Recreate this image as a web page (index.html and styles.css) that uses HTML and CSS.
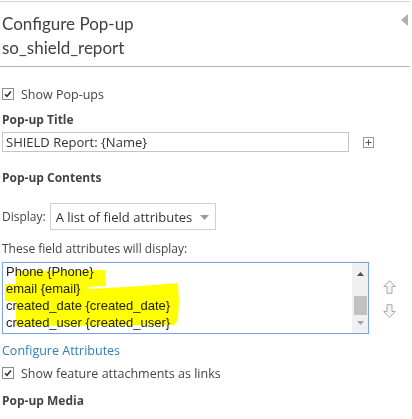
FILE: index.html
```html
<!DOCTYPE html>
<html>
<head>
<meta charset="utf-8">
<link rel="stylesheet" href="styles.css">
</head>
<body>
<div class="panel">
  <div class="header">
    <div class="titles">
      <div class="title">Configure Pop-up</div>
      <div class="subtitle">so_shield_report</div>
    </div>
    <svg class="collapse" width="7" height="12" viewBox="0 0 7 12"><polygon points="7,0 7,12 0,6" fill="#b0b0b0"/></svg>
  </div>
  <div class="content">
    <label class="check check-first">
      <span class="box"><svg width="8" height="8" viewBox="0 0 8 8"><path d="M1 4.2 L3 6.3 L7 1.5" fill="none" stroke="#333" stroke-width="1.6"/></svg></span>
      <span>Show Pop-ups</span>
    </label>
    <div class="section-title st-title">Pop-up Title</div>
    <div class="title-row">
      <div class="input">SHIELD Report: {Name}</div>
      <span class="plus"><svg width="11" height="11" viewBox="0 0 11 11"><rect x="0.5" y="0.5" width="10" height="10" fill="#fff" stroke="#999"/><path d="M5.5 2.5 V8.5 M2.5 5.5 H8.5" stroke="#555" stroke-width="1"/></svg></span>
    </div>
    <div class="section-title st-contents">Pop-up Contents</div>
    <div class="display-row">
      <span class="display-label">Display:</span>
      <div class="select">
        <span>A list of field attributes</span>
        <svg class="caret" width="9" height="5" viewBox="0 0 9 5"><polygon points="0,0 9,0 4.5,5" fill="#999"/></svg>
      </div>
    </div>
    <div class="hint">These field attributes will display:</div>
    <div class="list-row">
      <div class="listbox">
        <svg class="highlight" width="190" height="70" viewBox="0 0 190 70">
          <path d="M14 9 L103 8 L104 24 L86 25 L86 27 L140 24 L176 21 L177 40 L176 58 L172 63 L14 64 L14 40 L3 39 L3 22 L14 22 Z" fill="#ffff00"/>
        </svg>
        <div class="items">
          <div class="item">Phone {Phone}</div>
          <div class="item">email {email}</div>
          <div class="item">created_date {created_date}</div>
          <div class="item">created_user {created_user}</div>
        </div>
        <div class="scrollbar">
          <svg class="sb-up" width="7" height="4" viewBox="0 0 7 4"><polygon points="0,4 7,4 3.5,0" fill="#505050"/></svg>
          <div class="thumb"></div>
          <svg class="sb-down" width="7" height="4" viewBox="0 0 7 4"><polygon points="0,0 7,0 3.5,4" fill="#a3a3a3"/></svg>
        </div>
      </div>
      <div class="arrows">
        <svg width="13" height="14" viewBox="0 0 13 14"><path d="M6.5 0.7 L12.3 6.5 L9 6.5 L9 13.3 L4 13.3 L4 6.5 L0.7 6.5 Z" fill="#f6f6f6" stroke="#a8a8a8" stroke-width="1"/></svg>
        <svg width="13" height="14" viewBox="0 0 13 14"><path d="M6.5 13.3 L12.3 7.5 L9 7.5 L9 0.7 L4 0.7 L4 7.5 L0.7 7.5 Z" fill="#f6f6f6" stroke="#a8a8a8" stroke-width="1"/></svg>
      </div>
    </div>
    <a class="link">Configure Attributes</a>
    <label class="check check-second">
      <span class="box"><svg width="8" height="8" viewBox="0 0 8 8"><path d="M1 4.2 L3 6.3 L7 1.5" fill="none" stroke="#333" stroke-width="1.6"/></svg></span>
      <span>Show feature attachments as links</span>
    </label>
    <div class="section-title st-media">Pop-up Media</div>
  </div>
</div>
</body>
</html>
```
FILE: styles.css
```css
html, body {
  margin: 0;
  padding: 0;
  background: #fff;
}
body {
  font-family: "Open Sans", "Noto Sans", sans-serif;
  color: #444;
  width: 412px;
  height: 419px;
  overflow: hidden;
}
.panel {
  padding-top: 1px;
}
.header {
  display: flex;
  justify-content: space-between;
  align-items: flex-start;
  border-top: 1px solid #d4d4d4;
  border-bottom: 1px solid #b4b4b4;
  width: 410px;
  padding: 10px 0 0 2px;
  box-sizing: border-box;
  height: 66px;
}
.title,
.subtitle {
  font-family: Lato, "Open Sans", sans-serif;
  font-size: 17px;
  line-height: 24px;
  color: #404040;
}
.collapse {
  margin-top: 2px;
  margin-right: 2px;
}
.content {
  padding-left: 2px;
}
.check {
  display: flex;
  align-items: center;
  gap: 7px;
  font-size: 12.5px;
  color: #444;
  height: 14px;
}
.check-first {
  margin-top: 20px;
}
.check-second {
  margin-top: 7px;
}
.box {
  width: 10px;
  height: 10px;
  border: 1px solid #8c8c8c;
  display: flex;
  align-items: center;
  justify-content: center;
  background: #fff;
}
.section-title {
  font-weight: bold;
  font-size: 12px;
  color: #444;
  line-height: 16px;
}
.st-title {
  margin-top: 11px;
}
.st-contents {
  margin-top: 17px;
}
.st-media {
  margin-top: 13px;
}
.title-row {
  display: flex;
  align-items: center;
  gap: 14px;
  margin-top: 3px;
}
.input {
  width: 347px;
  height: 20px;
  box-sizing: border-box;
  border: 1px solid #c4c4c4;
  font-size: 13px;
  line-height: 18px;
  padding-left: 3px;
  color: #333;
}
.display-row {
  display: flex;
  align-items: center;
  gap: 4px;
  margin-top: 17px;
}
.display-label {
  font-size: 12px;
  color: #444;
}
.select {
  width: 166px;
  height: 27px;
  box-sizing: border-box;
  border: 1px solid #cfcfcf;
  display: flex;
  align-items: center;
  justify-content: space-between;
  padding: 0 6px 0 5px;
  font-size: 13px;
  color: #333;
}
.caret {
  margin-top: 1px;
}
.hint {
  font-size: 12px;
  color: #444;
  margin-top: 11px;
  line-height: 16px;
}
.list-row {
  display: flex;
  align-items: center;
  gap: 14px;
  margin-top: 5px;
}
.listbox {
  position: relative;
  width: 367px;
  height: 72px;
  box-sizing: border-box;
  border: 1px solid #7fa3dc;
  box-shadow: 0 0 1px 0 #b9cff0;
  display: flex;
}
.highlight {
  position: absolute;
  left: -1px;
  top: -1px;
  mix-blend-mode: multiply;
}
.items {
  flex: 1;
  padding-left: 3px;
  font-family: "Liberation Sans", Arial, sans-serif;
  font-size: 13px;
  line-height: 17px;
  color: #222;
  overflow: hidden;
}
.scrollbar {
  width: 16px;
  background: #f0f0f0;
  display: flex;
  flex-direction: column;
  align-items: center;
  padding-top: 9px;
}
.thumb {
  width: 13px;
  height: 19px;
  background: #c1c1c1;
  margin-top: 20px;
}
.sb-down {
  margin-top: 6px;
}
.arrows {
  display: flex;
  flex-direction: column;
  gap: 10px;
  margin-top: 2px;
}
.link {
  display: block;
  color: #2d7fb5;
  font-size: 12.5px;
  margin-top: 8px;
  line-height: 17px;
}
```
